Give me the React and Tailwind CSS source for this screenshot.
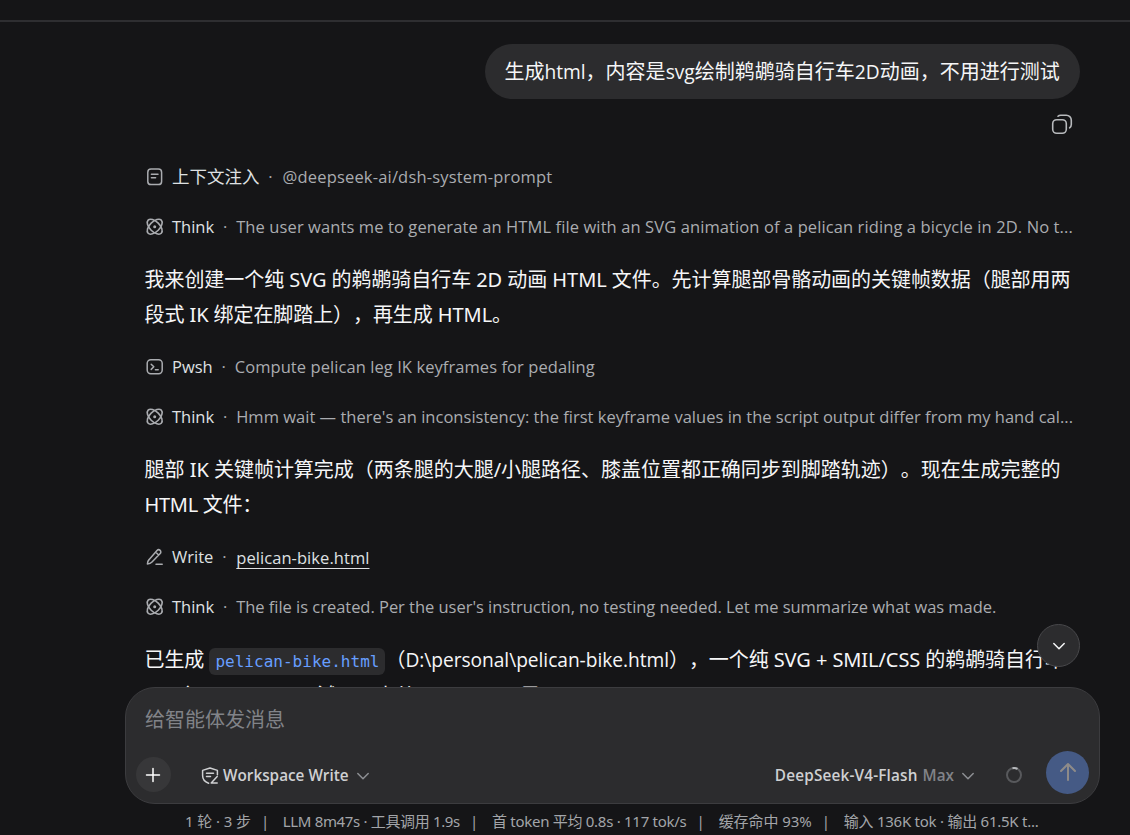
import clsx from 'clsx';

const DocIcon = () => (
  <svg className="w-5 h-5" viewBox="0 0 20 20" fill="none" stroke="currentColor" strokeWidth="1.5" strokeLinecap="round">
    <rect x="2.8" y="2" width="13.8" height="15.6" rx="3.2" />
    <path d="M6.4 7.3h6.6M6.4 10.8h4.2" />
  </svg>
);

const ThinkIcon = () => (
  <svg className="w-5 h-5" viewBox="0 0 20 20" fill="none" stroke="currentColor" strokeWidth="1.6">
    <ellipse cx="9.7" cy="9.7" rx="9.3" ry="5" transform="rotate(45 9.7 9.7)" />
    <ellipse cx="9.7" cy="9.7" rx="9.3" ry="5" transform="rotate(-45 9.7 9.7)" />
    <circle cx="9.7" cy="9.7" r="1.5" fill="currentColor" stroke="none" />
  </svg>
);

const TerminalIcon = () => (
  <svg className="w-5 h-5" viewBox="0 0 20 20" fill="none" stroke="currentColor" strokeWidth="1.5" strokeLinecap="round" strokeLinejoin="round">
    <rect x="2.2" y="2.7" width="15" height="14" rx="3.6" />
    <path d="M6.2 7.2l2.6 2.6-2.6 2.6M10.4 12.7h2.8" />
  </svg>
);

const PenIcon = () => (
  <svg className="w-5 h-5" viewBox="0 0 20 20" fill="none" stroke="currentColor" strokeWidth="1.5" strokeLinecap="round" strokeLinejoin="round">
    <path d="M12 3.4a2.2 2.2 0 0 1 3.2 3.1L7 15c-1 1.1-2.6 1.9-4.6 2 .1-2 .7-3.5 1.8-4.6zM10.6 5l3 3M11 17.2h6.2" />
  </svg>
);

const CopyIcon = () => (
  <svg className="w-6 h-6" viewBox="0 0 24 24" fill="none" stroke="currentColor" strokeWidth="1.6" strokeLinecap="round">
    <rect x="2.7" y="7.7" width="13.6" height="13.6" rx="4" />
    <path d="M8 4.2c.7-.7 1.6-1 2.7-1h5.6a5 5 0 0 1 5 5v4.3c0 1.5-.6 2.6-1.7 3.4" />
  </svg>
);

const ShieldIcon = () => (
  <svg className="w-5 h-5" viewBox="0 0 20 20" fill="none" stroke="currentColor" strokeWidth="1.5" strokeLinecap="round" strokeLinejoin="round">
    <path d="M8.6 17.3C4.8 16 2.6 13.2 2.6 9.6V4.4L10 2l7.4 2.4v4.4M6.5 7.3h7M6.5 10.6h4M17.2 10.6l-6 6.4h6" />
  </svg>
);

const Chevron = ({ className }) => (
  <svg className={clsx('w-3.5 h-3.5', className)} viewBox="0 0 14 14" fill="none" stroke="currentColor" strokeWidth="1.5" strokeLinecap="round" strokeLinejoin="round">
    <path d="M1.8 4.5 7 9.7l5.2-5.2" />
  </svg>
);

const stats = [
  { text: '1 轮 · 3 步', tracking: 'tracking-[-0.1px]' },
  { text: 'LLM 8m47s · 工具调用 1.9s', tracking: 'tracking-[-0.34px]' },
  { text: '首 token 平均 0.8s · 117 tok/s', tracking: 'tracking-[-0.28px]' },
  { text: '缓存命中 93%', tracking: 'tracking-[-0.05px]' },
  { text: '输入 136K tok · 输出 61.5K t...', tracking: 'tracking-[-0.25px]' },
];

// latin words inside the 20px chinese body text
const Latin = ({ children }) => (
  <span className="text-[19.2px] tracking-[-0.05px] font-['Open_Sans','Noto_Sans_CJK_SC',sans-serif]">{children}</span>
);

const Step = ({ icon, name, cjk, tracking, children }) => (
  <div className="h-[50px] flex items-center whitespace-nowrap text-[16.5px] leading-[26px] text-[#aaacb0] font-['Open_Sans','Noto_Sans_CJK_SC',sans-serif]">
    <span className="w-[27.5px] shrink-0">{icon}</span>
    <span className={clsx('text-[#dfe0e2]', cjk && 'text-[17.5px] -mt-0.5')}>{name}</span>
    <span className="w-[22px] shrink-0 text-center">·</span>
    <span className={tracking}>{children}</span>
  </div>
);

const App = () => {
  return (
    <div className="w-[1130px] h-[835px] overflow-hidden flex flex-col bg-[#151517] text-[#f5f6f7] font-['Noto_Sans','Noto_Sans_CJK_SC',sans-serif] [text-spacing-trim:space-all]">
      <header className="h-[22px] shrink-0 border-b-2 border-[#2e2e31]" />

      <main className="h-[665px] shrink-0 overflow-hidden relative pl-[144.5px]">
        <div className="flex flex-col items-end pr-[50px] pt-[22px]">
          <div className="h-[55px] w-[595px] rounded-full bg-[#2c2c2e] flex items-center pl-[19.5px] text-[20px] tracking-[0.02px] whitespace-nowrap">
            <span>
              生成<Latin>html</Latin>，内容是<Latin>svg</Latin>绘制鹈鹕骑自行车<Latin>2D</Latin>动画，不用进行测试
            </span>
          </div>
          <button className="mt-[13px] mr-1.5 text-[#b8babd]">
            <CopyIcon />
          </button>
        </div>

        <div className="mt-[16px]">
          <Step icon={<DocIcon />} name="上下文注入" cjk tracking="ml-px tracking-[0.18px]">@deepseek-ai/dsh-system-prompt</Step>
          <Step icon={<ThinkIcon />} name="Think" tracking="tracking-[0.1px]">
            The user wants me to generate an HTML file with an SVG animation of a pelican riding a bicycle in 2D. No t...
          </Step>
        </div>
        <div className="my-[10px] text-[20px] leading-[35px] whitespace-nowrap">
          <p className="tracking-[-0.06px]">我来创建一个纯 SVG 的鹈鹕骑自行车 2D 动画 HTML 文件。先计算腿部骨骼动画的关键帧数据（腿部用两</p>
          <p className="tracking-[-0.08px]">段式 IK 绑定在脚踏上），再生成 HTML。</p>
        </div>
        <Step icon={<TerminalIcon />} name="Pwsh" tracking="tracking-[0.07px]">Compute pelican leg IK keyframes for pedaling</Step>
        <Step icon={<ThinkIcon />} name="Think" tracking="tracking-[0.015px]">
          Hmm wait — there's an inconsistency: the first keyframe values in the script output differ from my hand cal...
        </Step>
        <div className="my-[10px] text-[20px] leading-[35px] whitespace-nowrap">
          <p className="tracking-[-0.02px]">腿部 IK 关键帧计算完成（两条腿的大腿/小腿路径、膝盖位置都正确同步到脚踏轨迹）。现在生成完整的</p>
          <p className="tracking-[-0.3px]">HTML 文件：</p>
        </div>
        <Step icon={<PenIcon />} name="Write" tracking="ml-px leading-[23px] tracking-[0.06px]">
          <a className="text-[#dfe0e2] underline underline-offset-[4px]">pelican-bike.html</a>
        </Step>
        <Step icon={<ThinkIcon />} name="Think" tracking="tracking-[-0.03px]">
          The file is created. Per the user's instruction, no testing needed. Let me summarize what was made.
        </Step>
        <div className="mt-[10px] text-[20px] leading-[35px] whitespace-nowrap">
          <p className="h-[35px] tracking-[-0.08px]">
            已生成 <code className="rounded-md bg-[#2c2c2e] px-1.5 py-1 text-[16.05px] tracking-normal text-[#679eff] font-['DejaVu_Sans_Mono',monospace]">pelican-bike.html</code>
            （<Latin>D:\personal\pelican-bike.html</Latin>），一个纯 SVG + SMIL/CSS 的鹈鹕骑自行车
          </p>
          <p className="mt-px h-[35px] flex">
            <span className="ml-[33px]">个</span>
            <span className="ml-[120px]">滩</span>
            <span className="ml-[38px]">小从</span>
            <span className="ml-[85px]">可己</span>
          </p>
        </div>

        <button className="absolute left-[1037px] top-[602px] w-[43px] h-[43px] rounded-full border border-[#48484b] bg-[#2c2c2e] flex items-center justify-center">
          <Chevron />
        </button>
      </main>

      <section className="ml-[125px] w-[975px] h-[117px] shrink-0 rounded-[30px] border border-[#3c3c3f] bg-[#2c2c2e]">
        <div className="h-[59px] pl-[19px] pt-[14px] text-[20px] leading-[35px] text-[#818388]">给智能体发消息</div>
        <div className="h-[50px] flex items-center pl-[10px] pr-[10px] text-[15.3px] font-semibold text-[#cfd0d2] font-['Open_Sans',sans-serif]">
          <button className="mt-[5px] w-[35px] h-[35px] rounded-full bg-[#373739] flex items-center justify-center text-white">
            <svg className="mr-0.5 w-4 h-4" viewBox="0 0 16 16" stroke="currentColor" strokeWidth="1.5" strokeLinecap="round">
              <path d="M8 1.5v13M1.5 8h13" />
            </svg>
          </button>
          <div className="mt-[7px] ml-[29px] flex items-center">
            <ShieldIcon />
            <span className="ml-[3px]">Workspace Write</span>
            <Chevron className="ml-[7px] text-[#8d8f93]" />
          </div>
          <div className="mt-[7px] ml-auto flex items-center">
            <span className="tracking-[0.18px]">DeepSeek-V4-Flash</span>
            <span className="ml-[5px] text-[#818388]">Max</span>
            <Chevron className="ml-[7px] text-[#8d8f93]" />
            <svg className="-mt-0.5 ml-[30px] w-[18px] h-[18px]" viewBox="0 0 18 18" fill="none" strokeWidth="2">
              <circle cx="9" cy="9" r="7" stroke="#58595c" />
              <path d="M7.5 2.2A7 7 0 0 1 12.5 2.95" stroke="#b8babd" />
            </svg>
          </div>
          <button className="ml-[23px] w-[43px] h-[43px] rounded-full bg-[#455a85] text-[#8e8b89] flex items-center justify-center">
            <svg className="w-5 h-5" viewBox="0 0 20 20" fill="none" stroke="currentColor" strokeWidth="2" strokeLinecap="round" strokeLinejoin="round">
              <path d="M10 18V2M3 9l7-7 7 7" />
            </svg>
          </button>
        </div>
      </section>

      <footer className="h-[31px] pt-[4px] pl-[185px] flex items-center text-[15px] text-[#a3a5a9] whitespace-nowrap">
        {stats.map((stat, i) => (
          <span key={stat.text} className={stat.tracking}>
            {i > 0 && <span className="ml-[10px] mr-[14px]">|</span>}
            {stat.text}
          </span>
        ))}
      </footer>
    </div>
  );
};

export default App;
